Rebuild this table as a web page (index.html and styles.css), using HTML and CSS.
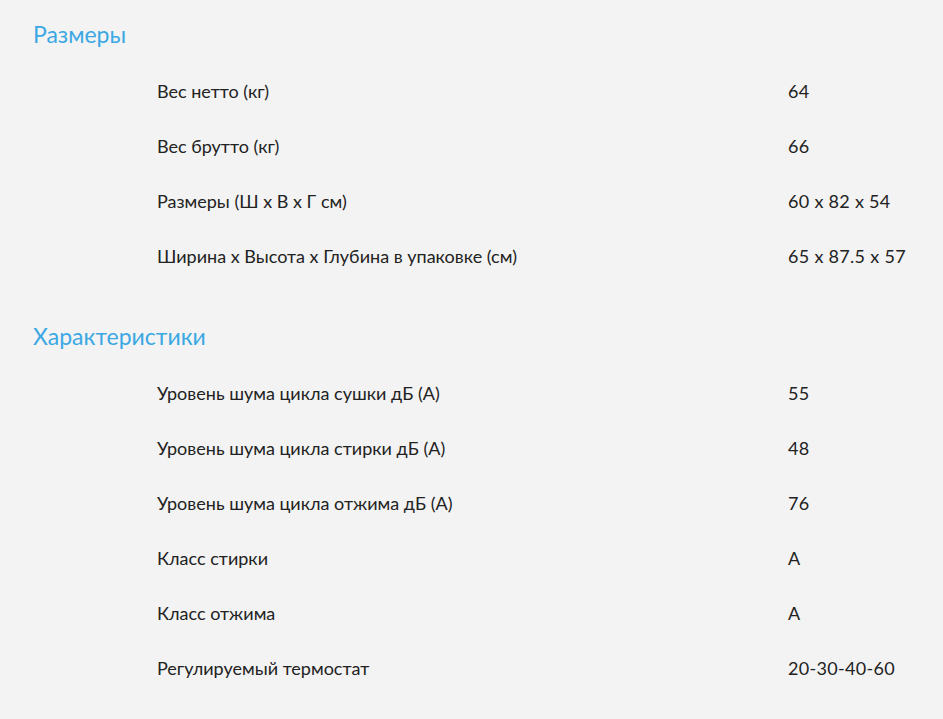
FILE: index.html
```html
<!DOCTYPE html>
<html lang="ru">
<head>
<meta charset="utf-8">
<link rel="stylesheet" href="styles.css">
</head>
<body>
<div class="specs">
  <section class="group">
    <h2 class="group-title">Размеры</h2>
    <div class="rows">
      <div class="row"><span class="label">Вес нетто (кг)</span><span class="value">64</span></div>
      <div class="row"><span class="label">Вес брутто (кг)</span><span class="value">66</span></div>
      <div class="row"><span class="label">Размеры (Ш x В x Г см)</span><span class="value">60 x 82 x 54</span></div>
      <div class="row"><span class="label">Ширина x Высота x Глубина в упаковке (см)</span><span class="value">65 x 87.5 x 57</span></div>
    </div>
  </section>
  <section class="group">
    <h2 class="group-title">Характеристики</h2>
    <div class="rows">
      <div class="row"><span class="label">Уровень шума цикла сушки дБ (A)</span><span class="value">55</span></div>
      <div class="row"><span class="label">Уровень шума цикла стирки дБ (A)</span><span class="value">48</span></div>
      <div class="row"><span class="label">Уровень шума цикла отжима дБ (A)</span><span class="value">76</span></div>
      <div class="row"><span class="label">Класс стирки</span><span class="value">A</span></div>
      <div class="row"><span class="label">Класс отжима</span><span class="value">A</span></div>
      <div class="row"><span class="label">Регулируемый термостат</span><span class="value">20-30-40-60</span></div>
    </div>
  </section>
</div>
</body>
</html>
```
FILE: styles.css
```css
html, body {
  margin: 0;
  padding: 0;
  background: #f3f3f3;
}
body {
  font-family: "Lato", "Noto Sans", sans-serif;
  color: #222;
}
.specs {
  padding: 14px 0 0 33px;
}
.group + .group {
  margin-top: 32px;
}
.group-title {
  margin: 0 0 10px;
  font-size: 23px;
  line-height: 40px;
  font-weight: 400;
  color: #3ba8e3;
}
.rows {
  margin-left: 124px;
}
.row {
  display: grid;
  grid-template-columns: 631px 1fr;
  height: 55px;
  line-height: 55px;
  font-size: 18px;
}
.value {
  letter-spacing: 0.3px;
}
```
